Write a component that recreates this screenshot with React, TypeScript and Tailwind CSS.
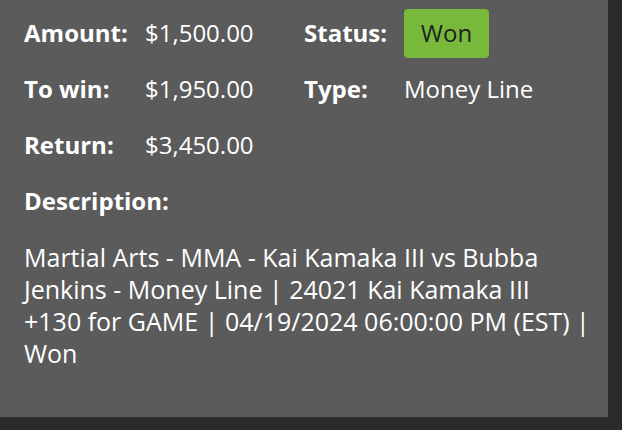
import React from 'react';

const rows = [
  { label: 'Amount:', value: '$1,500.00' },
  { label: 'To win:', value: '$1,950.00' },
  { label: 'Return:', value: '$3,450.00' },
];

export default function App() {
  return (
    <div className="w-[622px] h-[430px] bg-[#2b2b29] overflow-hidden" style={{ fontFamily: '"Open Sans", sans-serif' }}>
      <div className="w-[608px] h-[417px] bg-[#5b5b5b] pl-6 pt-[5px] text-white text-[24px]">
        <div className="flex">
          <div className="w-[280px]">
            {rows.map((r) => (
              <div key={r.label} className="h-[56px] flex items-center">
                <span className="w-[121px] font-bold">{r.label}</span>
                <span>{r.value}</span>
              </div>
            ))}
          </div>
          <div>
            <div className="h-[56px] flex items-center">
              <span className="w-[100px] font-bold">Status:</span>
              <span className="h-[49px] w-[85px] flex items-center justify-center rounded bg-[#78b83b] text-[#1f1f24]">Won</span>
            </div>
            <div className="h-[56px] flex items-center">
              <span className="w-[100px] font-bold">Type:</span>
              <span>Money Line</span>
            </div>
          </div>
        </div>
        <div className="h-[56px] flex items-center font-bold">Description:</div>
        <p className="mt-3 leading-[32px] w-[566px] text-[25px]">
          Martial Arts - MMA - Kai Kamaka III vs Bubba Jenkins - Money Line | 24021 Kai Kamaka III +130 for GAME | 04/19/2024 06:00:00 PM (EST) | Won
        </p>
      </div>
    </div>
  );
}
